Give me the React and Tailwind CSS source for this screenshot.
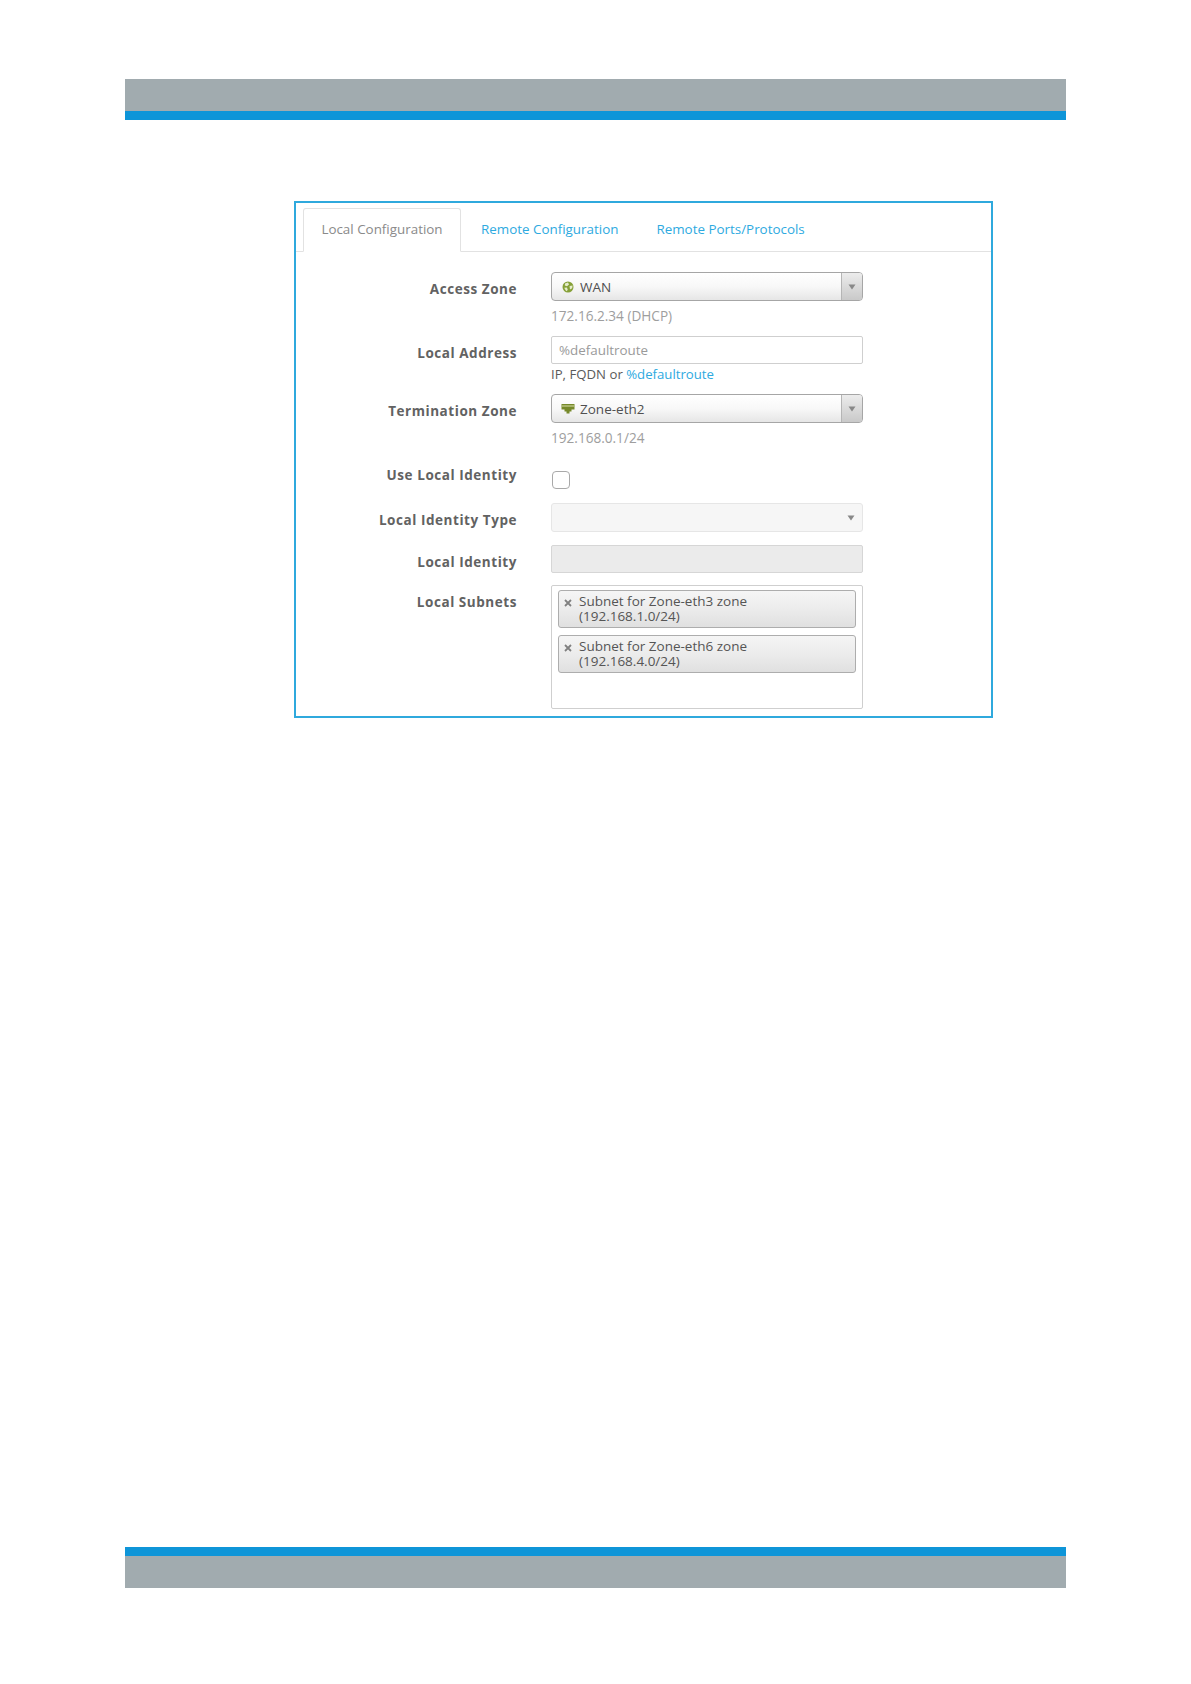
const font = { fontFamily: '"Open Sans", "Noto Sans", sans-serif' };

function GlobeIcon() {
  return (
    <svg width="12" height="12" viewBox="0 0 12 12" className="shrink-0">
      <circle cx="6" cy="6" r="5.5" fill="#86a038" />
      <path d="M3 2.5 L6 1.6 L7 3.6 L5 5.2 L2.8 4.4 Z M7.5 5 L10.6 4.4 L10.2 7.2 L8 8.6 Z M2.2 6.8 L5 6.6 L5.8 9 L4.2 10.2 Z" fill="#e6edcc" />
    </svg>
  );
}

function PortIcon() {
  return (
    <svg width="14" height="12" viewBox="0 0 14 12" className="shrink-0">
      <path d="M0.5 1 H13.5 V6.5 H10.5 V8.5 H8.5 V10.5 H5.5 V8.5 H3.5 V6.5 H0.5 Z" fill="#76892a" />
      <path d="M2 2 V4 M4 2 V4 M6 2 V4 M8 2 V4 M10 2 V4 M12 2 V4" stroke="#d9e0a8" strokeWidth="1" />
    </svg>
  );
}

function Arrow() {
  return (
    <svg width="8" height="6" viewBox="0 0 8 6">
      <path d="M0.5 0.5 H7.5 L4 5.5 Z" fill="#888888" />
    </svg>
  );
}

function Label({ children, className = "mt-[7px]" }) {
  return (
    <div className={`w-[221px] h-[20px] text-right text-[13.5px] leading-[20px] font-bold tracking-[0.55px] text-[#626262] ${className}`}>
      {children}
    </div>
  );
}

function Row({ label, labelClass, className = "", children }) {
  return (
    <div className={`flex gap-[34px] ${className}`}>
      <Label className={labelClass}>{label}</Label>
      <div className="w-[312px]">{children}</div>
    </div>
  );
}

function Select({ icon, text }) {
  return (
    <div className="flex h-[29px] items-stretch rounded-[4px] border border-[#a6a6a6] bg-gradient-to-b from-[#ffffff] via-[#f8f8f8] to-[#e6e6e6]">
      <div className="flex flex-1 items-center gap-[5px] pl-[9px] pt-[1px] text-[13.5px] text-[#505050]">
        <span className="flex w-[14px] justify-center">{icon}</span>
        <span>{text}</span>
      </div>
      <div className="flex w-[21px] items-center justify-center rounded-r-[3px] border-l border-[#b5b5b5] bg-gradient-to-b from-[#ececec] to-[#c9c9c9]">
        <Arrow />
      </div>
    </div>
  );
}

function Hint({ children, className = "mt-[5px]" }) {
  return <div className={`h-[21px] text-[13.6px] leading-[20px] text-[#9e9e9e] ${className}`}>{children}</div>;
}

function Chip({ line1, line2, className = "" }) {
  return (
    <div className={`flex h-[38px] items-start rounded-[3px] border border-[#adadad] bg-gradient-to-b from-[#f5f5f5] via-[#ececec] to-[#e0e0e0] pl-[5px] ${className}`}>
      <span className="mt-[8px] flex w-[15px] shrink-0">
        <svg width="8" height="8" viewBox="0 0 8 8">
          <path d="M1 1 L7 7 M7 1 L1 7" stroke="#808080" strokeWidth="1.8" />
        </svg>
      </span>
      <div className="pt-[3px] text-[13.5px] leading-[15px] text-[#555555]">
        <div>{line1}</div>
        <div>{line2}</div>
      </div>
    </div>
  );
}

function Tab({ children, className = "" }) {
  return <div className={`text-[13.4px] leading-[20px] text-[#2eaadf] ${className}`}>{children}</div>;
}

export default function App() {
  return (
    <div style={font} className="h-[1684px] bg-white pt-[79px]">
      <div className="ml-[125px] w-[941px]">
        <div className="h-[32px] bg-[#a1abaf]" />
        <div className="h-[9px] bg-[#0e95d8]" />

        <div className="ml-[169px] mt-[81px] box-border h-[517px] w-[699px] border-2 border-[#2fa9dd]">
          <div className="flex h-[49px] items-end border-b border-[#e2e2e2] pl-[7px]">
            <div className="-mb-px flex h-[44px] w-[158px] items-center justify-center rounded-t-[3px] border border-b-white border-[#e2e2e2] bg-white pb-[2px] text-[13.4px] text-[#8a8a8a]">
              Local Configuration
            </div>
            <div className="flex h-[44px] items-center pl-[20px]">
              <Tab>Remote Configuration</Tab>
              <Tab className="ml-[38px]">Remote Ports/Protocols</Tab>
            </div>
          </div>

          <div className="pt-[20px]">
            <Row label="Access Zone">
              <Select icon={<GlobeIcon />} text="WAN" />
              <Hint>172.16.2.34 (DHCP)</Hint>
            </Row>

            <Row label="Local Address" className="mt-[9px]">
              <div className="flex h-[28px] items-center rounded-[2px] border border-[#cfcfcf] bg-white pl-[7px] text-[13.4px] text-[#9a9a9a]">
                %defaultroute
              </div>
              <div className="h-[20px] text-[13.2px] leading-[20px] text-[#5a5a5a]">
                IP, FQDN or <span className="text-[#2eaadf]">%defaultroute</span>
              </div>
            </Row>

            <Row label="Termination Zone" className="mt-[10px]">
              <Select icon={<PortIcon />} text="Zone-eth2" />
              <Hint>192.168.0.1/24</Hint>
            </Row>

            <Row label="Use Local Identity" labelClass="-mt-[6px]" className="mt-[22px]">
              <div className="ml-px h-[18px] w-[18px] rounded-[4px] border border-[#a9a9a9] bg-white" />
            </Row>

            <Row label="Local Identity Type" className="mt-[14px]">
              <div className="flex h-[29px] items-center justify-end rounded-[3px] border border-[#e6e6e6] bg-[#f6f6f6] pr-[7px]">
                <Arrow />
              </div>
            </Row>

            <Row label="Local Identity" className="mt-[13px]">
              <div className="h-[28px] rounded-[2px] border border-[#d6d6d6] bg-[#ebebeb]" />
            </Row>

            <Row label="Local Subnets" className="mt-[12px]">
              <div className="h-[124px] rounded-[2px] border border-[#cfcfcf] bg-white px-[6px] pt-[4px]">
                <Chip line1="Subnet for Zone-eth3 zone" line2="(192.168.1.0/24)" />
                <Chip line1="Subnet for Zone-eth6 zone" line2="(192.168.4.0/24)" className="mt-[7px]" />
              </div>
            </Row>
          </div>
        </div>

        <div className="mt-[829px] h-[9px] bg-[#0e95d8]" />
        <div className="h-[32px] bg-[#a1abaf]" />
      </div>
    </div>
  );
}
